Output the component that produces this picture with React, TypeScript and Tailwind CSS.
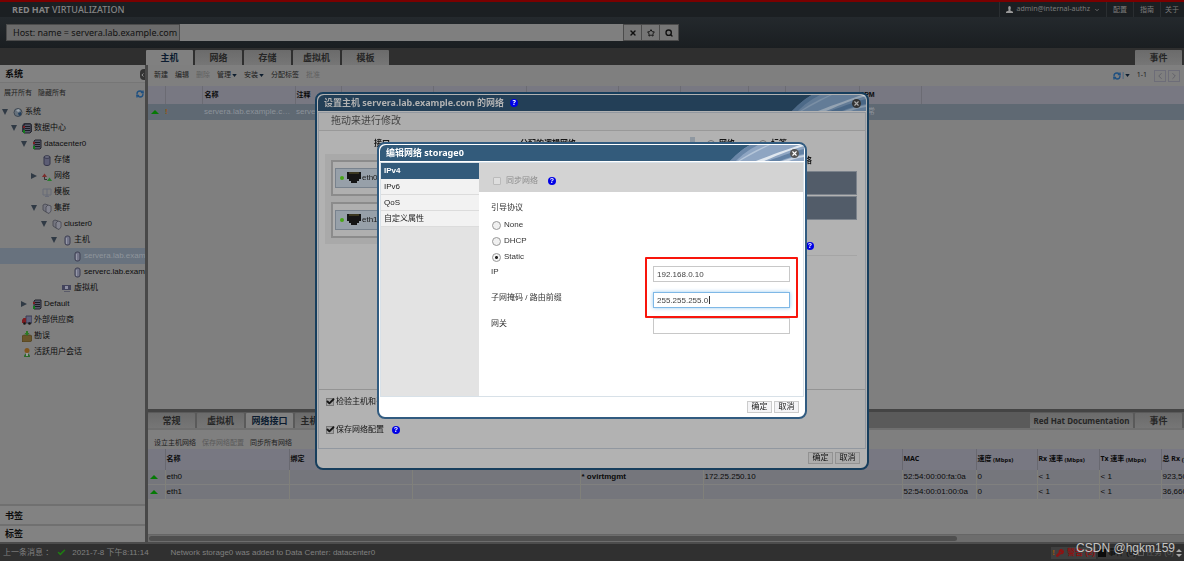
import type { ReactNode } from 'react'
import { RefreshCw, Search, Star, X, Check, Wrench, ChevronDown, ChevronLeft, ChevronRight } from 'lucide-react'

const sans = "font-['Liberation_Sans','Noto_Sans_CJK_SC',sans-serif]"
const heading = "font-['Noto_Sans','Noto_Sans_CJK_SC',sans-serif]"

const indents = ['pl-px', 'pl-[10px]', 'pl-[20px]', 'pl-[30px]', 'pl-[40px]', 'pl-[50px]', 'pl-[60px]']

type Node = { label: string; level: number; icon: string; arrow?: 'open' | 'closed'; selected?: boolean }

const tree: Node[] = [
  { label: '系统', level: 0, icon: 'globe', arrow: 'open' },
  { label: '数据中心', level: 1, icon: 'datacenters', arrow: 'open' },
  { label: 'datacenter0', level: 2, icon: 'datacenter', arrow: 'open' },
  { label: '存储', level: 3, icon: 'storage' },
  { label: '网络', level: 3, icon: 'network', arrow: 'closed' },
  { label: '模板', level: 3, icon: 'template' },
  { label: '集群', level: 3, icon: 'cluster', arrow: 'open' },
  { label: 'cluster0', level: 4, icon: 'cluster', arrow: 'open' },
  { label: '主机', level: 5, icon: 'host', arrow: 'open' },
  { label: 'servera.lab.example.com', level: 6, icon: 'host', selected: true },
  { label: 'serverc.lab.example.com', level: 6, icon: 'host' },
  { label: '虚拟机', level: 5, icon: 'vm' },
  { label: 'Default', level: 2, icon: 'datacenter', arrow: 'closed' },
  { label: '外部供应商', level: 1, icon: 'truck' },
  { label: '勘误', level: 1, icon: 'box' },
  { label: '活跃用户会话', level: 1, icon: 'user' },
]

const nics = [
  { name: 'eth0', network: '* ovirtmgmt', ip: '172.25.250.10', mac: '52:54:00:00:fa:0a', total: '923,506,114' },
  { name: 'eth1', network: '', ip: '', mac: '52:54:00:01:00:0a', total: '36,660,208' },
]

function TreeIcon({ name }: { name: string }) {
  const cls = 'h-[11px] w-[10px] shrink-0'
  switch (name) {
    case 'globe':
      return (
        <svg viewBox="0 0 10 11" className={cls}>
          <circle cx="5" cy="5.5" r="4" fill="#66717c" stroke="#3f4852" />
          <path d="M3 3l3-1 1 2-2 1z" fill="#9aa4ad" />
          <path d="M5 6l3-1v3l-2 1z" fill="#233f5c" />
        </svg>
      )
    case 'datacenters':
    case 'datacenter':
      return (
        <svg viewBox="0 0 10 11" className={cls}>
          {name === 'datacenters' && <path d="M0 2.500L2 0h6l2 2v7H0z" fill="#30323d" />}
          <path d="M2 2l1-1h6v8l-1 1H2z" fill="#555768" stroke="#22242c" />
          <path d="M3 3.500h5M3 5.500h5M3 7.500h5" stroke="#1b1c24" />
          <path d="M1 3h2v2H1z" fill="#7c1c22" />
          <path d="M1 7h2v3H1z" fill="#137a1c" />
        </svg>
      )
    case 'storage':
      return (
        <svg viewBox="0 0 10 11" className={cls}>
          <path d="M2 2v7c0 2 6 2 6 0V2z" fill="#5c5d74" stroke="#35364a" />
          <ellipse cx="5" cy="2" rx="3" ry="1.300" fill="#77788a" stroke="#35364a" />
        </svg>
      )
    case 'network':
      return (
        <svg viewBox="0 0 10 11" className={cls}>
          <path d="M0 6l2.500-3.500L5 6z" fill="#7d2d2d" />
          <path d="M5 10l2.500-3.500L10 10z" fill="#277c2c" />
          <path d="M2.500 6v2.500H5" fill="none" stroke="#333" />
        </svg>
      )
    case 'template':
      return (
        <svg viewBox="0 0 10 11" className={cls}>
          <path d="M1 2h8v6H1zM5 2v8M3 9.500h4" fill="none" stroke="#696c78" />
        </svg>
      )
    case 'cluster':
      return (
        <svg viewBox="0 0 10 11" className={cls}>
          <path d="M1 2l2-1 3 1v6L4 9 1 7z" fill="#74757f" stroke="#3c3d48" strokeWidth=".7" />
          <path d="M4 4l2-2 3 1v5L7 10.500 4 9z" fill="#83848f" stroke="#3c3d48" strokeWidth=".7" />
        </svg>
      )
    case 'host':
      return (
        <svg viewBox="0 0 10 11" className={cls}>
          <rect x="3" y="1" width="5" height="9" rx="2" fill="#74768a" stroke="#3d3f52" />
          <path d="M4.500 3v6" stroke="#9698a8" />
        </svg>
      )
    case 'vm':
      return (
        <svg viewBox="0 0 10 11" className={cls}>
          <path d="M0 2h9v5H0z" fill="#43445c" />
          <path d="M3 3h3v3H3z" fill="#8c8da0" />
          <path d="M2 8.500h6" stroke="#5a5b6a" />
        </svg>
      )
    case 'truck':
      return (
        <svg viewBox="0 0 10 11" className={cls}>
          <path d="M4 1h6v7H4z" fill="#60627c" stroke="#3a3c52" />
          <path d="M0 5l1.500-2H4v5H0z" fill="#7e1d22" />
          <circle cx="2.500" cy="8.500" r="1.300" fill="#161616" />
          <circle cx="7.500" cy="8.500" r="1.300" fill="#161616" />
        </svg>
      )
    case 'box':
      return (
        <svg viewBox="0 0 10 11" className={cls}>
          <path d="M0 5l2-1h6l2 1v4.500L8 11H0z" fill="#69552a" stroke="#433617" strokeWidth=".6" />
          <path d="M4 0h2v2h1.500L5 5 2.500 2H4z" fill="#2d7a22" />
        </svg>
      )
    default:
      return (
        <svg viewBox="0 0 10 11" className={cls}>
          <path d="M2 10c0-5 6-5 6 0z" fill="#2b6a2a" />
          <path d="M4 6h2v3H4z" fill="#999" />
          <circle cx="5" cy="3.500" r="2.500" fill="#80551c" />
        </svg>
      )
  }
}

function UpArrow() {
  return (
    <svg viewBox="0 0 8 4" className="h-1 w-2">
      <path d="M0 4l4-4 4 4z" fill="#057a05" />
    </svg>
  )
}

function Caret() {
  return (
    <svg viewBox="0 0 6 4" className="h-[3px] w-[5px]">
      <path d="M0 0h6L3 4z" fill="#0d1d2e" />
    </svg>
  )
}

function Help() {
  return (
    <span className="flex size-2 shrink-0 items-center justify-center rounded-full bg-[#0000e6] text-[7px] leading-none font-bold text-white">
      ?
    </span>
  )
}

function Tab({ children, active, wide }: { children: ReactNode; active?: boolean; wide?: boolean }) {
  return (
    <button
      className={`h-[15px] shrink-0 rounded-t-[1px] leading-[15px] font-bold whitespace-nowrap ${wide ? 'w-[103px] text-[8px]' : 'w-[47px] text-[9px]'} ${active ? 'bg-[#808080] text-[#0c1c30]' : 'bg-linear-to-b from-[#6b6b6b] to-[#767676] text-[#262626]'}`}
    >
      {children}
    </button>
  )
}

function Swoosh({ dim }: { dim?: boolean }) {
  return (
    <svg viewBox="0 0 74 16" preserveAspectRatio="none" className={`h-full w-[74px] ${dim ? 'opacity-60' : ''}`}>
      <path d="M0 16C8 8 14 3 20 0h54v16z" fill="#8ea5c2" />
      <path d="M0 16C8 8 14 3 20 0h8C18 5 12 10 6 16z" fill="#6a87a8" />
      <path d="M8 16C20 8 30 3 38 0h2C30 5 20 10 10 16z" fill="#b4c5d8" />
      <path d="M26 16C44 9 58 4 70 0h4v1C56 6 44 12 34 16z" fill="#dfe7ef" />
      <path d="M38 16C54 10 66 6 74 4v5c-10 2-18 4-24 7z" fill="#6382a5" />
      <path d="M52 16c8-3 16-5 22-6v2c-6 1-11 2-15 4z" fill="#c6d2e0" />
    </svg>
  )
}

function CloseButton({ dim }: { dim?: boolean }) {
  return (
    <button
      aria-label="关闭"
      className={`absolute top-1 right-[5px] flex size-[9px] items-center justify-center rounded-full ${dim ? 'bg-[#333] text-[#aaa]' : 'bg-[#555] text-white'}`}
    >
      <X size={7} strokeWidth={4} />
    </button>
  )
}

function DialogButton({ children, dim }: { children: ReactNode; dim?: boolean }) {
  return (
    <button
      className={`h-3 w-[25px] border text-[8px] leading-[10px] ${dim ? 'border-[#929292] bg-[#acacac] text-[#111]' : 'border-[#ccc] bg-[#f4f4f6] text-[#222]'}`}
    >
      {children}
    </button>
  )
}

function TopBar() {
  return (
    <header className="shrink-0 border-t-2 border-[#7a0000] bg-[#1b1f22]">
      <div className="flex h-[15px] items-center text-[7px] text-[#7c7c7c]">
        <h1 className={`pl-3 text-[9px] leading-[15px] text-[#858585] ${heading}`}>
          <b>RED HAT</b> <span className="font-medium">VIRTUALIZATION</span>
        </h1>
        <nav className={`ml-auto flex h-full items-center ${heading}`}>
          <button className="flex h-full items-center gap-1 border-l border-[#2a2e31] px-[6px]">
            <svg viewBox="0 0 8 8" className="size-[7px]">
              <path d="M2.500 2a1.500 2 0 013 0c0 1.500-.5 2-.5 3l3 1.500V8H0V6.500L3 5c0-1-.5-1.500-.5-3z" fill="#999" />
            </svg>
            admin@internal-authz
            <ChevronDown size={6} strokeWidth={3} />
          </button>
          <a href="#settings" className="border-l border-[#2a2e31] px-[6px] leading-[15px]">配置</a>
          <a href="#guide" className="border-l border-[#2a2e31] px-[6px] leading-[15px]">指南</a>
          <a href="#about" className="border-l border-[#2a2e31] pr-[5px] pl-1 leading-[15px]">关于</a>
        </nav>
      </div>
      <form className="flex h-[31px] items-center bg-linear-to-b from-[#24292d] to-[#1a1e21] pl-[6px]">
        <label htmlFor="search" className={`h-[17px] w-[174px] border border-[#4b4b4b] bg-[#6b6b6b] pl-[6px] text-[9px] leading-[15px] whitespace-nowrap text-[#111] ${heading}`}>
          Host: name = servera.lab.example.com
        </label>
        <input id="search" className="h-[17px] w-[443px] bg-[#7f7f7f] outline-none" />
        <div className="flex h-[17px] divide-x divide-[#4b4b4b] border border-[#4b4b4b] bg-[#767676] text-[#111]">
          <button type="button" aria-label="清除" className="flex w-[18px] items-center justify-center"><X size={8} strokeWidth={4} /></button>
          <button type="button" aria-label="书签" className="flex w-[18px] items-center justify-center"><Star size={8} strokeWidth={3} /></button>
          <button type="button" aria-label="搜索" className="flex w-[18px] items-center justify-center"><Search size={8} strokeWidth={4} /></button>
        </div>
      </form>
    </header>
  )
}

function Sidebar() {
  return (
    <aside className="flex w-[145px] shrink-0 flex-col overflow-hidden bg-[#7f7f7f] text-[#0d0d0d]">
      <div className="flex h-[18px] shrink-0 items-center border-b border-[#767676] bg-[#828282] pt-[2px] pl-[5px]">
        <h2 className="text-[9px] font-bold">系统</h2>
        <button aria-label="收起" className="ml-auto flex h-[11px] w-[5px] items-center rounded-l-sm bg-[#333] text-[#aaa]">
          <ChevronLeft size={6} strokeWidth={4} />
        </button>
      </div>
      <div className="flex h-[21px] shrink-0 items-center gap-[6px] pr-px pl-1 text-[7px] text-[#222]">
        <button>展开所有</button>
        <button>隐藏所有</button>
        <button aria-label="刷新" className="ml-auto text-[#1f5080]"><RefreshCw size={8} strokeWidth={4} /></button>
      </div>
      <ul className="flex-1 text-[8px] leading-4">
        {tree.map((node) => (
          <li
            key={node.label}
            className={`flex h-4 items-center whitespace-nowrap ${indents[node.level]} ${node.selected ? 'bg-[#68727e] text-[#8f959c]' : ''}`}
          >
            <span className="mr-1 flex w-2 shrink-0 justify-center">
              {node.arrow && (
                <svg viewBox="0 0 6 6" className={`size-[6px] ${node.arrow === 'closed' ? '-rotate-90' : ''}`}>
                  <path d="M0 0h6L3 6z" fill="#303a45" />
                </svg>
              )}
            </span>
            <TreeIcon name={node.icon} />
            <span className="pl-[2px]">{node.label}</span>
          </li>
        ))}
      </ul>
      <h2 className="h-5 shrink-0 border-t-2 border-[#707070] bg-[#828282] pl-[5px] text-[9px] leading-5 font-bold">书签</h2>
      <h2 className="h-[18px] shrink-0 border-t-2 border-[#707070] bg-[#828282] pl-[5px] text-[9px] leading-[17px] font-bold">标签</h2>
    </aside>
  )
}

function HostsPanel() {
  return (
    <section className="min-h-0 flex-1 overflow-hidden bg-[#7f7f7f]">
      <div className="flex h-[21px] items-center gap-[7px] pr-1 pl-[6px] text-[7px] text-[#202020]">
        <button>新建</button>
        <button>编辑</button>
        <button disabled className="text-[#5f5f5f]">删除</button>
        <button className="flex items-center gap-px">管理<Caret /></button>
        <button className="flex items-center gap-px">安装<Caret /></button>
        <button>分配标签</button>
        <button disabled className="text-[#5f5f5f]">批准</button>
        <button aria-label="刷新" className="ml-auto flex items-center gap-px text-[#1f5080]">
          <RefreshCw size={8} strokeWidth={4} />|<Caret />
        </button>
        <span className={`text-[7px] ${heading}`}>1-1</span>
        <div className="flex gap-[2px] text-[#5c5c66]">
          <button aria-label="上一页" className="border border-[#6d6d78]"><ChevronLeft size={10} /></button>
          <button aria-label="下一页" className="border border-[#6d6d78]"><ChevronRight size={10} /></button>
        </div>
      </div>
      <table className="w-full table-fixed text-left text-[8px] text-[#0a0a0a]">
        <colgroup>
          <col className="w-[17px]" />
          <col className="w-[37px]" />
          <col className="w-[93px]" />
          <col className="w-[46px]" />
          <col className="w-[92px]" />
          <col className="w-[93px]" />
          <col className="w-[92px]" />
          <col className="w-[62px]" />
          <col className="w-[68px]" />
          <col className="w-[37px]" />
          <col className="w-[74px]" />
          <col className="w-[62px]" />
          <col />
        </colgroup>
        <thead>
          <tr className="h-[18px] divide-x divide-[#6b6b73] bg-[#787882] text-[7px]">
            <th />
            <th />
            <th className="pl-[2px]">名称</th>
            <th className="pl-px">注释</th>
            <th /><th /><th /><th /><th /><th /><th />
            <th>SPM</th>
            <th />
          </tr>
        </thead>
        <tbody>
          <tr className="h-4 bg-[#5f6973] text-[#8c929a]">
            <td className="pl-[3px]"><UpArrow /></td>
            <td className="font-bold text-[#94540c]">!</td>
            <td className="truncate pr-1 pl-[2px]">servera.lab.example.com</td>
            <td className="overflow-hidden pl-px">servera</td>
            <td colSpan={7} />
            <td>正常</td>
            <td />
          </tr>
        </tbody>
      </table>
    </section>
  )
}

function Unit() {
  return <sub className="text-[6px]"> (Mbps)</sub>
}

function DetailPanel() {
  return (
    <section className="shrink-0 overflow-hidden border-t-[3px] border-[#444] bg-[#7f7f7f]">
      <div className={`flex h-[18px] items-end gap-[2px] border-b-2 border-[#6f6f6f] bg-[#5a5a5a] pr-[2px] ${heading}`}>
        <Tab>常规</Tab>
        <Tab>虚拟机</Tab>
        <Tab active>网络接口</Tab>
        <Tab>主机设备</Tab>
        <span className="ml-auto" />
        <Tab wide>Red Hat Documentation</Tab>
        <Tab>事件</Tab>
      </div>
      <div className="flex h-[19px] items-end gap-[6px] pb-[2px] pl-[6px] text-[7px] leading-[9px] text-[#1c1c1c]">
        <button>设立主机网络</button>
        <button disabled className="text-[#595959]">保存网络配置</button>
        <button>同步所有网络</button>
      </div>
      <table className="w-[1160px] table-fixed text-left text-[8px] text-[#0a0a0a]">
        <colgroup>
          <col className="w-[17px]" />
          <col className="w-[124px]" />
          <col className="w-[123px]" />
          <col className="w-[168px]" />
          <col className="w-[123px]" />
          <col className="w-[199px]" />
          <col className="w-[74px]" />
          <col className="w-[61px]" />
          <col className="w-[62px]" />
          <col className="w-[62px]" />
          <col />
        </colgroup>
        <thead>
          <tr className={`h-[21px] divide-x divide-[#686870] bg-[#787882] text-[7px] whitespace-nowrap ${heading}`}>
            <th />
            <th className="pl-px">名称</th>
            <th className="pl-px">绑定</th>
            <th /><th /><th />
            <th className="pl-px">MAC</th>
            <th className="pl-px">速度<Unit /></th>
            <th className="pl-px">Rx 速率<Unit /></th>
            <th className="pl-px">Tx 速率<Unit /></th>
            <th className="pl-px">总 Rx <sub className="text-[6px]">(字节)</sub></th>
          </tr>
        </thead>
        <tbody>
          {nics.map((nic) => (
            <tr key={nic.name} className="h-[15px] divide-x divide-[#80807a] border-b border-[#80807f] bg-[#75767c]">
              <td className="pl-[2px]"><UpArrow /></td>
              <td className="pl-px">{nic.name}</td>
              <td /><td />
              <td className="pl-px font-bold">{nic.network}</td>
              <td className="pl-px">{nic.ip}</td>
              <td className="pl-px">{nic.mac}</td>
              <td className="pl-px">0</td>
              <td className="pl-px">&lt; 1</td>
              <td className="pl-px">&lt; 1</td>
              <td className="pl-px">{nic.total}</td>
            </tr>
          ))}
        </tbody>
      </table>
      <div className="mt-[34px] h-2 border-t border-[#666] bg-[#6d6d6d] py-px">
        <div className="ml-px h-[5px] w-[78%] rounded-full bg-[#4f4f4f]" />
      </div>
    </section>
  )
}

function StatusBar() {
  return (
    <footer className="flex h-[19px] shrink-0 items-center border-t-2 border-[#4c4c4c] bg-[#303030] pl-[3px] text-[8px] whitespace-nowrap text-[#808080]">
      <span>上一条消息 ：</span>
      <Check size={9} strokeWidth={4} className="ml-1 text-[#1f7d12]" />
      <span className="ml-[6px]">2021-7-8 下午8:11:14</span>
      <span className="ml-[22px]">Network storage0 was added to Data Center: datacenter0</span>
      <div className="relative ml-auto flex h-full items-center gap-[2px] pr-[2px]">
        <button className="flex h-3 items-center gap-px bg-[#3f3f3f] px-px font-bold text-[#8e1212]">
          <b className="text-[#a0570c]">!</b>
          <Wrench size={8} strokeWidth={4} />
          <span className="pl-[2px]">警告 (2)</span>
        </button>
        <button className="flex h-3 items-center gap-[2px] bg-[#383838] text-[#0c0c0c]">
          <span className="size-2 bg-[#0c0c0c]" />事件 (0)
        </button>
        <button className="flex h-3 items-center gap-[2px] text-[#5a5a5a]">
          <span className="size-[6px] border border-[#5a5a5a]" />任务 (0)
        </button>
        <svg viewBox="0 0 6 8" className="h-2 w-[6px]">
          <path d="M0 3l3-3 3 3zM0 5h6L3 8z" fill="#aaa" />
        </svg>
        <span className="absolute -top-[5px] right-[9px] text-[12px] leading-[18px] text-[#c4c4c4]">CSDN @hgkm159</span>
      </div>
    </footer>
  )
}

function NicBox({ name }: { name: string }) {
  return (
    <div className="h-9 border-2 border-[#8b8b8b] bg-[#afafaf] px-[2px] pt-[6px]">
      <div className="flex h-5 w-24 items-center border border-[#78828d] bg-[#97a0a9] pl-1 text-[8px] text-[#1a1a1a]">
        <span className="size-1 rounded-full bg-[#48a617]" />
        <svg viewBox="0 0 14 11" className="mr-px ml-[3px] h-[11px] w-[14px]">
          <path d="M0 0h14v7h-2v2h-2v2H4V9H2V7H0z" fill="#151515" />
          <path d="M2 1h10" stroke="#635a2c" />
        </svg>
        {name}
      </div>
    </div>
  )
}

const boxCls =
  'flex size-2 appearance-none items-center justify-center border border-[#777] bg-[#a2a2a2]'

function SetupDialog() {
  return (
    <div className="fixed inset-0 flex items-center justify-center">
      <div role="dialog" aria-label="设置主机网络" className="flex h-[378px] w-[554px] flex-col overflow-hidden rounded-lg border-2 border-[#173e5d] bg-[#b2b2b2] p-px text-[8px] text-[#151515]">
        <div className={`relative flex h-4 shrink-0 items-center gap-[6px] rounded-t-md bg-[#233f57] pl-[6px] text-[9px] font-bold text-[#b2b2b2] ${heading}`}>
          设置主机 servera.lab.example.com 的网络
          <Help />
          <span className="ml-auto h-full"><Swoosh dim /></span>
          <CloseButton dim />
        </div>
        <div className="mt-px flex flex-1 flex-col border border-[#9298a0]">
          <p className="h-[18px] border-b border-[#999] bg-[#adadad] pl-3 text-[10px] leading-4 text-[#444]">拖动来进行修改</p>
          <div className="flex flex-1 px-[6px] pt-[6px]">
            <div className="grow">
              <div className="flex h-[14px] text-center text-[8px] leading-[14px] font-bold">
                <span className="w-[114px]">接口</span>
                <span className="w-[218px]">分配的逻辑网络</span>
              </div>
              <div className="mt-[3px] flex h-[90px] flex-col gap-[6px] bg-[#a9a9a9] p-[6px]">
                <NicBox name="eth0" />
                <NicBox name="eth1" />
              </div>
            </div>
            <div className="mr-3 h-24 w-[5px] bg-[#8f98a1]" />
            <div className="mr-[2px] w-[150px]">
              <div className="flex h-[14px] items-center gap-1 text-[8px] font-bold">
                <input id="kind-net" name="kind" type="radio" className="size-2 appearance-none rounded-full border border-[#777]" />
                <label htmlFor="kind-net" className="mr-5">网络</label>
                <input id="kind-label" name="kind" type="radio" className="size-2 appearance-none rounded-full border border-[#777]" />
                <label htmlFor="kind-label">标签</label>
              </div>
              <p className="h-5 pt-1 pr-[45px] text-right text-[8px] font-bold">未分配的逻辑网络</p>
              <div className="h-6 border border-[#7b828b] bg-[#525c69]" />
              <div className="mt-px h-6 border border-[#7b828b] bg-[#525c69]" />
              <div className="flex h-9 items-end justify-end border-b border-[#a5a5a5] pr-[43px] pb-[5px]"><Help /></div>
            </div>
          </div>
          <div className="h-[59px] border-t border-[#949494] px-[7px] pt-[6px]">
            <div className="flex h-3 items-center gap-[2px]">
              <span className="relative flex">
                <input id="verify" type="checkbox" defaultChecked className={boxCls} />
                <Check size={9} strokeWidth={5} className="pointer-events-none absolute -top-px left-0" />
              </span>
              <label htmlFor="verify">检验主机和引擎之间的连接</label>
            </div>
            <div className="mt-4 flex h-3 items-center gap-[2px]">
              <span className="relative flex">
                <input id="save" type="checkbox" defaultChecked className={boxCls} />
                <Check size={9} strokeWidth={5} className="pointer-events-none absolute -top-px left-0" />
              </span>
              <label htmlFor="save" className="mr-[6px]">保存网络配置</label>
              <Help />
            </div>
          </div>
        </div>
        <div className="flex h-[18px] shrink-0 items-center justify-end gap-[2px] pr-[6px]">
          <DialogButton dim>确定</DialogButton>
          <DialogButton dim>取消</DialogButton>
        </div>
      </div>
    </div>
  )
}

const inputCls = 'mt-px h-4 w-[137px] border bg-white pl-[3px] text-[8px] text-[#444] outline-none'
const radioCls =
  'size-[9px] appearance-none rounded-full border border-[#999] bg-[#f0f0f0] checked:bg-[radial-gradient(circle,#222_0_1px,#f4f4f4_2px)]'

function EditDialog() {
  return (
    <div className="fixed inset-0 flex items-center justify-center">
      <div role="dialog" aria-label="编辑网络" className="flex h-[277px] w-[430px] flex-col overflow-hidden rounded-lg border-2 border-[#315b80] bg-white p-px text-[8px] text-[#333]">
        <div className={`relative flex h-4 shrink-0 items-center rounded-t-md bg-[#335b7b] pl-[6px] text-[9px] font-bold text-white ${heading}`}>
          编辑网络 storage0
          <span className="ml-auto h-full"><Swoosh /></span>
          <CloseButton />
        </div>
        <div className="mt-px flex flex-1 border border-[#d8e1e8]">
          <nav className="w-[98px] shrink-0 bg-[#e3e3e3]">
            {['IPv4', 'IPv6', 'QoS', '自定义属性'].map((item, index) => (
              <button
                key={item}
                className={`block h-4 w-full border-b pl-[3px] text-left leading-[15px] ${index === 0 ? 'border-[#335b7b] bg-[#335b7b] font-bold text-white' : 'border-[#dcdcdc] bg-[#f2f2f2] text-[#222]'}`}
              >
                {item}
              </button>
            ))}
          </nav>
          <form className="flex-1">
            <div className="flex h-[29px] items-center bg-[#d3d3d3] pt-[6px] pl-[14px] text-[#8c8c8c]">
              <input id="sync" type="checkbox" disabled className="size-2 appearance-none rounded-[1px] border border-[#bbb] bg-[#dedede]" />
              <label htmlFor="sync" className="mr-[10px] ml-[5px]">同步网络</label>
              <Help />
            </div>
            <div className="pt-2 pl-3">
              <p className="mb-px leading-4">引导协议</p>
              {['None', 'DHCP', 'Static'].map((mode) => (
                <div key={mode} className="flex h-4 items-center gap-[3px] pl-px">
                  <input id={mode} name="boot" type="radio" defaultChecked={mode === 'Static'} className={radioCls} />
                  <label htmlFor={mode}>{mode}</label>
                </div>
              ))}
              <div className="relative">
                <div className="flex h-[26px] leading-[14px]">
                  <label htmlFor="ip" className="w-[162px]">IP</label>
                  <input id="ip" defaultValue="192.168.0.10" className={`${inputCls} border-[#c8c8c8]`} />
                </div>
                <div className="flex h-[26px] leading-[14px]">
                  <label htmlFor="mask" className="w-[162px]">子网掩码 / 路由前缀</label>
                  <div className="relative">
                    <input id="mask" defaultValue="255.255.255.0" className={`${inputCls} border-[#7fb8e6] shadow-[0_0_4px_#9bcbf0]`} />
                    <span className="absolute top-[5px] left-[56px] h-2 w-px bg-[#333]" />
                  </div>
                </div>
                <div className="flex h-[26px] leading-[14px]">
                  <label htmlFor="gateway" className="w-[162px]">网关</label>
                  <input id="gateway" className={`${inputCls} border-[#c8c8c8]`} />
                </div>
                <div className="pointer-events-none absolute -top-2 left-[154px] h-[61px] w-[153px] rounded-[1px] border-2 border-[#f8150c]" />
              </div>
            </div>
          </form>
        </div>
        <div className="flex h-[19px] shrink-0 items-center justify-end gap-[2px] pr-[5px]">
          <DialogButton>确定</DialogButton>
          <DialogButton>取消</DialogButton>
        </div>
      </div>
    </div>
  )
}

export default function App() {
  return (
    <div className={`flex h-screen min-h-[400px] flex-col overflow-hidden bg-[#303030] ${sans}`}>
      <TopBar />
      <div className={`flex h-[17px] shrink-0 items-end gap-[2px] bg-[#2f2f2f] pr-[2px] pl-[146px] ${heading}`}>
        <Tab active>主机</Tab>
        <Tab>网络</Tab>
        <Tab>存储</Tab>
        <Tab>虚拟机</Tab>
        <Tab>模板</Tab>
        <span className="ml-auto" />
        <Tab>事件</Tab>
      </div>
      <main className="flex min-h-0 flex-1">
        <Sidebar />
        <div className="w-[3px] shrink-0 bg-[#484848]" />
        <div className="flex min-w-0 flex-1 flex-col">
          <HostsPanel />
          <DetailPanel />
        </div>
      </main>
      <StatusBar />
      <SetupDialog />
      <EditDialog />
    </div>
  )
}
